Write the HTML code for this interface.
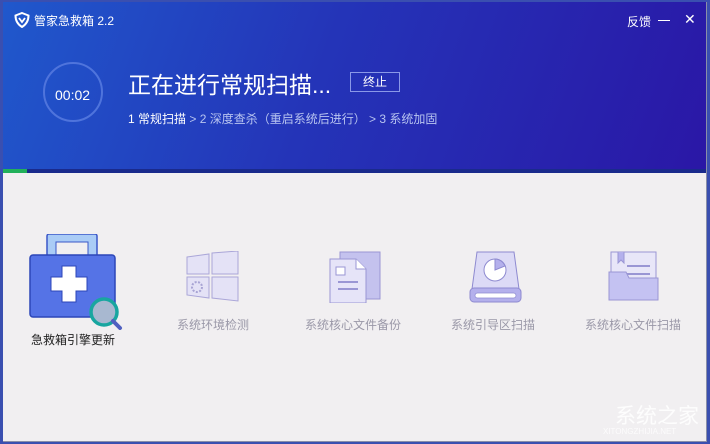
<!DOCTYPE html>
<html><head><meta charset="utf-8"><style>
*{margin:0;padding:0;box-sizing:border-box}
html,body{width:710px;height:444px;overflow:hidden}
body{background:#3a4fb0;font-family:"Liberation Sans","Noto Sans CJK SC",sans-serif;position:relative}
.win{position:absolute;left:3px;top:2px;width:704px;height:440px;background:#f1eff1;border-right:1px solid #8a8fa8;border-bottom:1px solid #8a8fa8;overflow:hidden}
.hdr{position:absolute;left:0;top:0;width:703px;height:168px;background:linear-gradient(110deg,#2058cc 0%,#2434b8 45%,#2a17a6 100%)}
.prog{position:absolute;left:0;top:167px;width:703px;height:4px;background:#1a2a8c}
.prog i{position:absolute;left:0;top:0;width:24px;height:4px;background:#22b05a}
.t{position:absolute;color:#fff;white-space:nowrap}
.lbl{position:absolute;font-size:12px;color:#9a98a8;white-space:nowrap;text-align:center}
</style></head><body>
<div class="win">
<div class="hdr">
<svg style="position:absolute;left:11px;top:10px" width="16" height="16" viewBox="0 0 16 16"><path d="M8 1 L14.5 3.5 Q14.5 11 8 15 Q1.5 11 1.5 3.5 Z" fill="none" stroke="#fff" stroke-width="2"/><path d="M5 6 L8 10 L11 6" fill="none" stroke="#fff" stroke-width="1.8"/></svg>
<div class="t" style="left:31px;top:10px;font-size:12px">管家急救箱 2.2</div>
<div class="t" style="left:624px;top:11px;font-size:12px">反馈</div>
<div style="position:absolute;left:655px;top:18px;width:12px;height:1px;background:#fff"></div>
<div class="t" style="left:681px;top:9px;font-size:14px;font-weight:300">✕</div>
<div style="position:absolute;left:40px;top:60px;width:60px;height:60px;border:2px solid #4f74dc;border-radius:50%"></div>
<div class="t" style="left:52px;top:85px;font-size:14px">00:02</div>
<div class="t" style="left:125px;top:64px;font-size:23px">正在进行常规扫描...</div>
<div style="position:absolute;left:347px;top:70px;width:50px;height:20px;border:1px solid #8a98e8;color:#fff;font-size:12px;text-align:center;line-height:18px">终止</div>
<div class="t" style="left:125px;top:108px;font-size:12px;color:#b8c4f0"><span style="color:#fff">1 常规扫描</span> &gt; 2 深度查杀（重启系统后进行） &gt; 3 系统加固</div>
</div>
<div class="prog"><i></i></div>

<svg style="position:absolute;left:25px;top:232px" width="100" height="96" viewBox="0 0 100 96">
<rect x="19" y="0" width="50" height="24" rx="2" fill="#aaccf6" stroke="#3b57c8" stroke-width="1.5"/>
<rect x="28" y="8" width="32" height="14" fill="#f1eff1" stroke="#3b57c8" stroke-width="1"/>
<rect x="2" y="21" width="85" height="62" rx="3" fill="#5573e6" stroke="#2c46b8" stroke-width="1.5"/>
<path d="M34 32 h14 v11 h11 v14 h-11 v11 h-14 v-11 h-11 v-14 h11z" fill="#fff" stroke="#2c46b8" stroke-width="1"/>
<circle cx="76" cy="78" r="13" fill="#a8b8d0" stroke="#18a6a0" stroke-width="3.5"/>
<line x1="85" y1="87" x2="92" y2="94" stroke="#5060c0" stroke-width="4" stroke-linecap="round"/>
</svg>
<div class="lbl" style="left:25px;top:329px;width:90px;color:#222">急救箱引擎更新</div>

<svg style="position:absolute;left:183px;top:249px" width="54" height="52" viewBox="0 0 54 52">
<path d="M1 6 L23 3 V23 H1Z M26 2 L52 0 V23 H26Z M1 26 H23 V47 L1 44Z M26 26 H52 V50 L26 47Z" fill="#e4e2f6" stroke="#aaa6d8" stroke-width="1"/>
<circle cx="11" cy="36" r="5" fill="none" stroke="#a8a4d4" stroke-width="2" stroke-dasharray="2 1.5"/>
</svg>
<div class="lbl" style="left:170px;top:314px;width:80px">系统环境检测</div>

<svg style="position:absolute;left:325px;top:249px" width="55" height="52" viewBox="0 0 55 52">
<rect x="12" y="1" width="40" height="47" fill="#c4c2ee" stroke="#9a96d4"/>
<path d="M2 8 H28 L38 18 V52 H2Z" fill="#e6e4f8" stroke="#9a96d4"/>
<path d="M28 8 V18 H38" fill="#fff" stroke="#9a96d4"/>
<rect x="8" y="16" width="9" height="8" fill="#fff" stroke="#9a96d4"/>
<line x1="10" y1="31" x2="30" y2="31" stroke="#9a96d4" stroke-width="2"/><line x1="10" y1="38" x2="30" y2="38" stroke="#9a96d4" stroke-width="2"/>
</svg>
<div class="lbl" style="left:300px;top:314px;width:100px">系统核心文件备份</div>

<svg style="position:absolute;left:466px;top:249px" width="54" height="52" viewBox="0 0 54 52">
<path d="M8 1 H45 L50 38 H3Z" fill="#dcdaf6" stroke="#8e8ad0"/>
<rect x="1" y="37" width="51" height="14" rx="4" fill="#b4b0ec" stroke="#8e8ad0"/>
<rect x="6" y="42" width="41" height="5" rx="2.5" fill="#fff" stroke="#8e8ad0" stroke-width=".7"/>
<circle cx="26" cy="19" r="11" fill="#fff" stroke="#8e8ad0"/>
<path d="M26 19 V8 A11 11 0 0 1 36 15Z" fill="#b4b0ec" stroke="#8e8ad0"/>
</svg>
<div class="lbl" style="left:445px;top:314px;width:90px">系统引导区扫描</div>

<svg style="position:absolute;left:605px;top:249px" width="52" height="52" viewBox="0 0 52 52">
<rect x="3" y="1" width="45" height="36" fill="#e8e6f8" stroke="#9a96d4"/>
<path d="M10 1 V12 L13 9 L16 12 V1" fill="#b4b0ec" stroke="#9a96d4"/>
<line x1="19" y1="15" x2="42" y2="15" stroke="#9a96d4" stroke-width="2"/><line x1="19" y1="23" x2="42" y2="23" stroke="#9a96d4" stroke-width="2"/>
<path d="M1 21 H18 L21 27 H50 V49 H1Z" fill="#c4c2f2" stroke="#9a96d4"/>
</svg>
<div class="lbl" style="left:578px;top:314px;width:104px">系统核心文件扫描</div>

<div style="position:absolute;left:612px;top:398px;font-size:21px;color:#fff;opacity:.9;white-space:nowrap">系统之家</div>
<div style="position:absolute;left:600px;top:425px;font-size:8px;color:#fff;opacity:.8;white-space:nowrap">XITONGZHIJIA.NET</div>
</div>
</body></html>
